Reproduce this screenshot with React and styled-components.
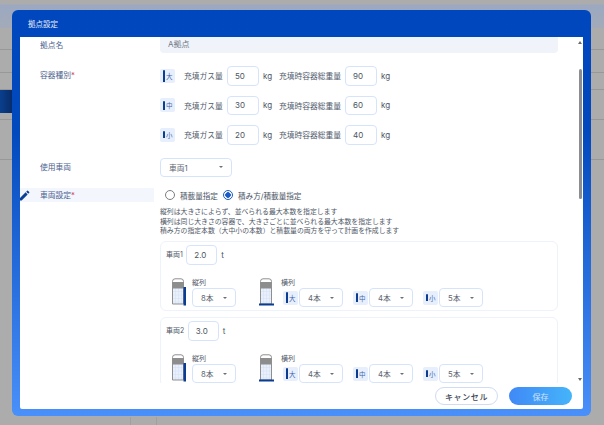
import React from "react";
import styled, { createGlobalStyle } from "styled-components";

const GlobalStyle = createGlobalStyle`
  html, body { margin: 0; padding: 0; height: 100%; background: #acacac; }
  body { font-family: Inter, "Noto Sans CJK JP", sans-serif; overflow: hidden; }
  * { box-sizing: border-box; }
`;

const gasRows = [
  { size: "大", bar: 12, gas: 50, total: 90 },
  { size: "中", bar: 9, gas: 30, total: 60 },
  { size: "小", bar: 7, gas: 20, total: 40 },
];

const vehicles = [
  { name: "車両1", ton: "2.0" },
  { name: "車両2", ton: "3.0" },
];

const sideRows = [
  { size: "大", bar: 11, value: "4本" },
  { size: "中", bar: 9, value: "4本" },
  { size: "小", bar: 7, value: "5本" },
];

const SizeBadge = ({ size, bar }) => (
  <Badge>
    <BottleBar $h={bar} />
    {size}
  </Badge>
);

const Truck = ({ side }) => (
  <svg width="15" height="28" viewBox="0 0 15 28">
    <rect x="1.500" y="10" width="11" height="16" fill="#e9f0fb" />
    <path d="M1.500 13.500h11M1.500 17h11M1.500 20.500h11M1.500 24h11M4.500 10v16M7.500 10v16M10.500 10v16" stroke="#d3e0f5" strokeWidth="0.5" />
    <rect x="1.500" y="4" width="11" height="6.500" fill="#8d8d8d" />
    <path d="M1.500 26V3.500Q1.500 0.800 4 0.800H10Q12.500 0.800 12.500 3.500V26Z" fill="none" stroke="#8f8f8f" strokeWidth="1" />
    {side ? (
      <rect x="0" y="25.500" width="15" height="2" fill="#0a3d91" />
    ) : (
      <rect x="12.500" y="9" width="2.500" height="18.500" fill="#0a3d91" />
    )}
  </svg>
);

const Select = ({ value, width }) => (
  <SelectBox $w={width}>
    {value}
    <Caret />
  </SelectBox>
);

const VehicleCard = ({ name, ton }) => (
  <Card>
    <CardTop>
      <SmallLabel>{name}</SmallLabel>
      <NumberBox $w={31}>{ton}</NumberBox>
      <Unit>t</Unit>
    </CardTop>
    <CardBottom>
      <Truck />
      <Column $ml={6}>
        <SmallLabel>縦列</SmallLabel>
        <Select value="8本" width={44} />
      </Column>
      <SideGroup>
        <Truck side />
        <Column $ml={7}>
          <SmallLabel>横列</SmallLabel>
          <SideSelects>
            {sideRows.map((r) => (
              <SideItem key={r.size}>
                <SizeBadge size={r.size} bar={r.bar} />
                <Select value={r.value} width={44} />
              </SideItem>
            ))}
          </SideSelects>
        </Column>
      </SideGroup>
    </CardBottom>
  </Card>
);

const PencilIcon = () => (
  <svg width="13" height="13" viewBox="0 0 24 24" fill="#0b3f94">
    <path d="M3 17.250V21h3.750L17.810 9.940l-3.750-3.750L3 17.250zM20.710 7.040a1 1 0 0 0 0-1.410l-2.340-2.340a1 1 0 0 0-1.410 0l-1.830 1.830 3.750 3.750 1.830-1.830z" />
  </svg>
);

export default function App() {
  return (
    <Page>
      <GlobalStyle />
      <BackTop />
      <BackRow $h={22} />
      <BackRow $h={23} />
      <BackRow $h={17} />
      <NavBand />
      <BackRow $h={7} />
      <BackRow $h={40} />
      <BackColumns>
        <BackColumn $w={26} />
        <BackColumn $w={291} />
      </BackColumns>

      <Modal>
        <ModalTitle>拠点設定</ModalTitle>
        <ModalInner>
          <ScrollBody>
            <FormRow>
              <FieldLabel $h={16}>拠点名</FieldLabel>
              <NameField>A拠点</NameField>
            </FormRow>

            <FormRow $mt={13}>
              <FieldLabel $h={19}>
                容器種別<Req>*</Req>
              </FieldLabel>
              <GasList>
                {gasRows.map((r) => (
                  <GasRow key={r.size}>
                    <SizeBadge size={r.size} bar={r.bar} />
                    <GasName>充填ガス量</GasName>
                    <NumberBox $w={32}>{r.gas}</NumberBox>
                    <Unit>kg</Unit>
                    <TotalName>充填時容器総重量</TotalName>
                    <NumberBox $w={32}>{r.total}</NumberBox>
                    <Unit>kg</Unit>
                  </GasRow>
                ))}
              </GasList>
            </FormRow>

            <FormRow $mt={13}>
              <FieldLabel $h={19}>使用車両</FieldLabel>
              <Select value="車両1" width={72} />
            </FormRow>

            <FormRow $mt={11.5}>
              <ActiveLabel>
                <PencilSlot>
                  <PencilIcon />
                </PencilSlot>
                車両設定<Req>*</Req>
              </ActiveLabel>
              <RadioRow>
                <RadioItem>
                  <Radio />
                  積載量指定
                </RadioItem>
                <RadioItem>
                  <Radio $on />
                  積み方/積載量指定
                </RadioItem>
              </RadioRow>
            </FormRow>

            <FormRow $mt={5}>
              <span />
              <div>
                <Note>
                  <div>縦列は大きさによらず、並べられる最大本数を指定します</div>
                  <div>横列は同じ大きさの容器で、大きさごとに並べられる最大本数を指定します</div>
                  <div>積み方の指定本数（大中小の本数）と積載量の両方を守って計画を作成します</div>
                </Note>
                <CardList>
                  {vehicles.map((v) => (
                    <VehicleCard key={v.name} name={v.name} ton={v.ton} />
                  ))}
                </CardList>
              </div>
            </FormRow>
          </ScrollBody>

          <Footer>
            <CancelButton>キャンセル</CancelButton>
            <SaveButton>保存</SaveButton>
          </Footer>

          <ScrollArrowUp />
          <ScrollThumb />
          <ScrollArrowDown />
        </ModalInner>
      </Modal>
    </Page>
  );
}

const Page = styled.div`
  position: relative;
  width: 604px;
  height: 425px;
  overflow: hidden;
  background: #acacac;
`;

const BackTop = styled.div`
  height: 28px;
  background: linear-gradient(180deg, #acacac 0, #acacac 4px, #9ba8c0 5px, #a3abb9 28px);
`;

const BackRow = styled.div`
  height: ${(p) => p.$h}px;
  border-bottom: 1px solid #989898;
`;

const NavBand = styled.div`
  width: 14px;
  height: 23px;
  background: linear-gradient(90deg, #0a3f8e, #062a63);
`;

const BackColumns = styled.div`
  position: absolute;
  left: 130px;
  bottom: 0;
  height: 8px;
  display: flex;
`;

const BackColumn = styled.div`
  width: ${(p) => p.$w}px;
  border-left: 1px solid #a0a0a0;
`;

const Modal = styled.div`
  position: absolute;
  left: 12px;
  top: 10px;
  width: 579px;
  height: 406px;
  padding: 0 8px 7px;
  display: flex;
  flex-direction: column;
  border-radius: 6px;
  background: linear-gradient(180deg, #0047bd 0, #0249be 30%, #4a90fa 100%);
`;

const ModalTitle = styled.div`
  height: 27px;
  padding-left: 8px;
  display: flex;
  align-items: center;
  font-size: 7.500px;
  color: #e6edf9;
`;

const ModalInner = styled.div`
  position: relative;
  flex: 1;
  display: flex;
  flex-direction: column;
  background: #fff;
  border-radius: 0 0 2px 2px;
`;

const ScrollBody = styled.div`
  height: 346px;
  overflow: hidden;
  padding-right: 25px;
`;

const FormRow = styled.div`
  display: grid;
  grid-template-columns: 140px 1fr;
  align-items: start;
  margin-top: ${(p) => p.$mt || 0}px;
`;

const FieldLabel = styled.div`
  padding-left: 20px;
  height: ${(p) => p.$h}px;
  line-height: ${(p) => p.$h}px;
  font-size: 7.750px;
  color: #4a618f;
`;

const ActiveLabel = styled.div`
  position: relative;
  width: 134px;
  height: 14px;
  line-height: 14px;
  padding-left: 20px;
  font-size: 7.750px;
  color: #4a618f;
  background: #f3f6fd;
`;

const PencilSlot = styled.span`
  position: absolute;
  left: -2px;
  top: 1px;
  line-height: 0;
`;

const Req = styled.span`
  color: #d9455f;
`;

const NameField = styled.div`
  height: 16px;
  padding: 0 8px 3px;
  display: flex;
  align-items: center;
  font-size: 8px;
  color: #6d7686;
  background: #f0f3f9;
  border-radius: 0 0 4px 4px;
`;

const GasList = styled.div`
  display: flex;
  flex-direction: column;
  gap: 10px;
`;

const GasRow = styled.div`
  display: flex;
  align-items: center;
  height: 19.500px;
`;

const Badge = styled.div`
  flex: none;
  width: 15px;
  height: 14px;
  display: flex;
  align-items: center;
  justify-content: center;
  gap: 1px;
  font-size: 6.500px;
  color: #3f66ad;
  background: #e7effc;
  border-radius: 2px;
`;

const BottleBar = styled.span`
  width: 2.500px;
  height: ${(p) => p.$h}px;
  background: #0a3d91;
  border-radius: 1px 1px 0 0;
`;

const GasName = styled.span`
  margin-left: 9px;
  width: 43px;
  font-size: 7.750px;
  color: #505a6b;
  white-space: nowrap;
`;

const TotalName = styled.span`
  margin-left: 4px;
  width: 66px;
  font-size: 7.750px;
  color: #505a6b;
  white-space: nowrap;
`;

const NumberBox = styled.div`
  flex: none;
  width: ${(p) => p.$w}px;
  height: 19.500px;
  padding-left: 7px;
  display: flex;
  align-items: center;
  font-size: 8px;
  color: #4d5561;
  background: #fff;
  border: 1px solid #d6e4fb;
  border-radius: 4px;
`;

const Unit = styled.span`
  margin-left: 4px;
  width: 12px;
  font-size: 8px;
  color: #4d5561;
`;

const SelectBox = styled.div`
  position: relative;
  flex: none;
  width: ${(p) => p.$w}px;
  height: 19px;
  padding-left: 8px;
  display: flex;
  align-items: center;
  font-size: 7.750px;
  color: #5e6672;
  background: #fff;
  border: 1px solid #d6e4fb;
  border-radius: 4px;
`;

const Caret = styled.span`
  position: absolute;
  right: 8px;
  top: 7.500px;
  border-left: 2.500px solid transparent;
  border-right: 2.500px solid transparent;
  border-top: 2.500px solid #6a6f78;
`;

const RadioRow = styled.div`
  height: 14px;
  padding-left: 5px;
  display: flex;
  align-items: center;
  gap: 5px;
`;

const RadioItem = styled.div`
  display: flex;
  align-items: center;
  gap: 5px;
  font-size: 7.600px;
  color: #4a5464;
`;

const Radio = styled.span`
  width: 10px;
  height: 10px;
  border-radius: 50%;
  background: ${(p) => (p.$on ? "radial-gradient(circle, #1a5cc8 0 2.500px, #fff 3px)" : "#fff")};
  border: 1px solid ${(p) => (p.$on ? "#1a5cc8" : "#7d7d7d")};
`;

const Note = styled.div`
  font-size: 6.850px;
  line-height: 9.500px;
  color: #4f5866;
  white-space: nowrap;
`;

const CardList = styled.div`
  margin-top: 5px;
  display: flex;
  flex-direction: column;
  gap: 6px;
`;

const Card = styled.div`
  height: 70px;
  padding: 3.500px 0 0 5px;
  border: 1px solid #eef2fb;
  border-radius: 6px;
`;

const CardTop = styled.div`
  display: flex;
  align-items: center;
  height: 19.500px;
  & > div { margin-left: 3.500px; }
`;

const SmallLabel = styled.span`
  display: block;
  font-size: 7px;
  line-height: 9px;
  color: #4f5866;
  white-space: nowrap;
`;

const CardBottom = styled.div`
  margin-top: 13.500px;
  display: flex;
  align-items: flex-start;
  padding-left: 5px;
`;

const Column = styled.div`
  margin-left: ${(p) => p.$ml}px;
  display: flex;
  flex-direction: column;
  gap: 1px;
`;

const SideGroup = styled.div`
  margin-left: 23px;
  display: flex;
  align-items: flex-start;
`;

const SideSelects = styled.div`
  margin-left: 2px;
  display: flex;
  gap: 10px;
`;

const SideItem = styled.div`
  display: flex;
  align-items: center;
  gap: 1px;
`;

const Footer = styled.div`
  flex: 1;
  display: flex;
  justify-content: flex-end;
  gap: 11px;
  padding: 4px 11px 0 0;
`;

const CancelButton = styled.button`
  width: 63px;
  height: 18px;
  padding: 0;
  font-family: inherit;
  font-size: 8px;
  font-weight: 500;
  letter-spacing: 0.6px;
  color: #3e4654;
  background: #fff;
  border: 1px solid #cfdcf2;
  border-radius: 9px;
`;

const SaveButton = styled.button`
  width: 63px;
  height: 18px;
  padding: 0;
  font-family: inherit;
  font-size: 8px;
  color: #cfe2fb;
  background: linear-gradient(90deg, #4089f6, #45b4fa);
  border: none;
  border-radius: 9px;
`;

const ScrollThumb = styled.div`
  position: absolute;
  right: 1px;
  top: 32px;
  width: 3.500px;
  height: 130px;
  background: #8b8d90;
  border-radius: 2px;
`;

const ScrollArrowUp = styled.div`
  position: absolute;
  right: 1px;
  top: 4px;
  border-left: 2px solid transparent;
  border-right: 2px solid transparent;
  border-bottom: 3px solid #6a6a6a;
`;

const ScrollArrowDown = styled.div`
  position: absolute;
  right: 1px;
  top: 341px;
  border-left: 2px solid transparent;
  border-right: 2px solid transparent;
  border-top: 3px solid #6a6a6a;
`;
